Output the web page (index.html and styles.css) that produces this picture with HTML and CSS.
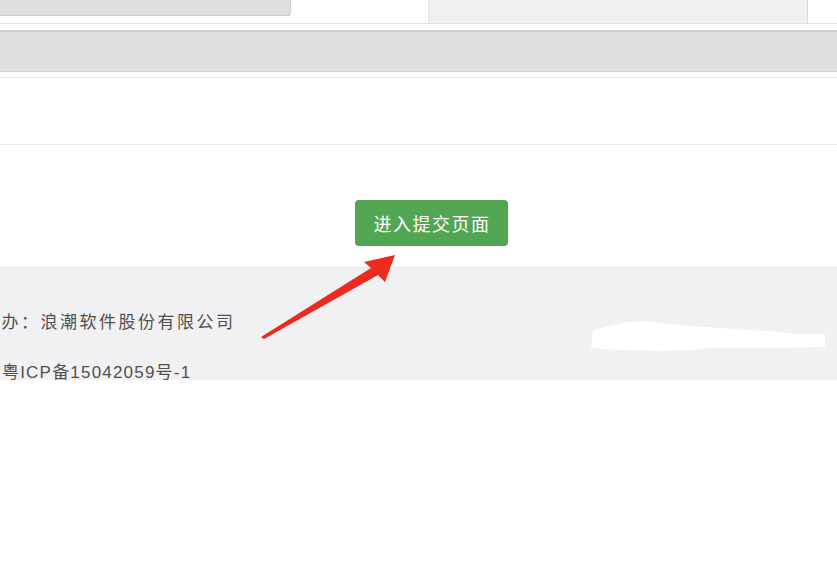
FILE: index.html
```html
<!DOCTYPE html>
<html lang="zh-CN">
<head>
  <meta charset="UTF-8">
  <meta name="viewport" content="width=device-width, initial-scale=1.0">
  <title>进入提交页面</title>
  <link rel="stylesheet" href="styles.css">
</head>
<body>
  <div class="page">
    <div class="topbar">
      <div class="tab-left"></div>
      <div class="tab-gap"></div>
      <div class="tab-right"></div>
    </div>
    <div class="band"></div>
    <div class="sub-line"></div>
    <div class="content">
      <div class="btn-row">
        <button class="submit-btn">进入提交页面</button>
      </div>
    </div>
    <div class="footer">
      <p class="footer-line first">主办：浪潮软件股份有限公司</p>
      <p class="footer-line">粤ICP备15042059号-1</p>
      <!-- redacted block -->
      <svg class="redact" width="240" height="45" viewBox="0 0 240 45">
        <polygon points="4,20 38,12 56,11 100,16 145,19 180,21 208,24 236,24 236,37 170,38 120,38 106,40 74,41 30,40 2,38" fill="#fff"/>
      </svg>
    </div>
    <div class="blank"></div>
    <!-- red arrow pointing at the button -->
    <svg class="arrow" width="837" height="562" viewBox="0 0 837 562">
      <polygon points="261,337 371,268 364,262 395,255 385,282 378,275 264,339" fill="#ec2a1f"/>
    </svg>
  </div>
</body>
</html>
```

FILE: styles.css
```css
body {
  margin: 0;
  background-color: #fff;
  font-family: "Liberation Sans", "Noto Sans CJK SC", sans-serif;
}
.page {
  position: relative;
  width: 837px;
  height: 562px;
  overflow: hidden;
}
.topbar {
  display: flex;
  height: 23px;
  border-bottom: 1px solid #e2e2e2;
}
.tab-left {
  width: 290px;
  height: 15px;
  background-color: #dedede;
  border-right: 1px solid #cfcfcf;
  border-bottom: 1px solid #cdcdcd;
  border-bottom-right-radius: 3px;
}
.tab-gap {
  width: 137px;
}
.tab-right {
  width: 378px;
  height: 23px;
  background-color: #f0f0f0;
  border-left: 1px solid #e4e4e4;
  border-right: 1px solid #d8d8d8;
}
.band {
  margin-top: 6px;
  height: 39px;
  background-color: #dfdfdf;
  border-top: 2px solid #cfcfcf;
  border-bottom: 1px solid #d2d2d2;
}
.sub-line {
  margin-top: 5px;
  height: 1px;
  background-color: #e6e6e6;
}
.content {
  margin-top: 66px;
  border-top: 1px solid #e6e6e6;
  height: 122px;
}
.btn-row {
  padding-top: 55px;
  padding-left: 355px;
}
.submit-btn {
  width: 153px;
  height: 46px;
  border: none;
  border-radius: 4px;
  background-color: #52a653;
  color: #fff;
  font-family: "Noto Sans CJK SC", sans-serif;
  font-size: 18px;
  letter-spacing: 1.5px;
  padding: 0 0 0 1px;
}
.footer {
  position: relative;
  height: 113px;
  background-color: #f1f1f3;
  border-top: 1px solid #e9e9ea;
  box-sizing: border-box;
}
.footer-line {
  margin: 0;
  color: #505050;
  font-family: "Liberation Sans", "Noto Sans CJK SC", sans-serif;
  font-size: 17px;
  letter-spacing: 2.5px;
  line-height: 22px;
  white-space: nowrap;
}
.footer-line.first {
  padding-top: 44px;
  margin-left: -18px;
}
.footer-line + .footer-line {
  margin-top: 28px;
  margin-left: 2px;
  letter-spacing: 1.2px;
}
.redact {
  position: absolute;
  left: 589px;
  top: 42px;
}
.arrow {
  position: absolute;
  left: 0;
  top: 0;
  pointer-events: none;
}
```
